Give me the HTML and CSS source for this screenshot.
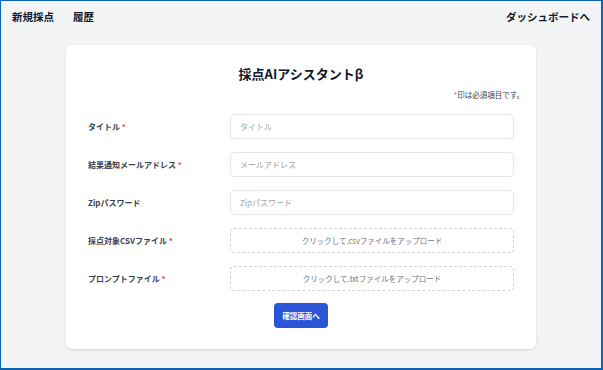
FILE: index.html
```html
<!DOCTYPE html>
<html lang="ja">

<head>
    <meta charset="utf-8">
    <meta name="viewport" content="width=device-width, initial-scale=1.0">
    <title>採点AIアシスタントβ</title>
    <link rel="stylesheet" href="styles.css">
</head>

<body>
    <div class="frame">
        <header class="topbar">
            <nav class="nav-left">
                <a href="#">新規採点</a>
                <a href="#">履歴</a>
            </nav>
            <a href="#" class="nav-right">ダッシュボードへ</a>
        </header>

        <main>
            <section class="card">
                <h1>採点AIアシスタントβ</h1>
                <p class="note"><span class="req">*</span>印は必須項目です。</p>

                <form class="form">
                    <label class="label" for="title">タイトル <span class="req">*</span></label>
                    <input class="field" id="title" type="text" placeholder="タイトル">

                    <label class="label" for="mail">結果通知メールアドレス <span class="req">*</span></label>
                    <input class="field" id="mail" type="email" placeholder="メールアドレス">

                    <label class="label" for="zip">Zipパスワード</label>
                    <input class="field" id="zip" type="text" placeholder="Zipパスワード">

                    <label class="label">採点対象CSVファイル <span class="req">*</span></label>
                    <div class="upload">クリックして.csvファイルをアップロード</div>

                    <label class="label">プロンプトファイル <span class="req">*</span></label>
                    <div class="upload">クリックして.txtファイルをアップロード</div>

                    <div class="actions">
                        <button type="button" class="submit">確認画面へ</button>
                    </div>
                </form>
            </section>
        </main>
    </div>
</body>

</html>
```

FILE: styles.css
```css
* {
    margin: 0;
    padding: 0;
    box-sizing: border-box;
}

html,
body {
    height: 100%;
}

body {
    font-family: "Noto Sans CJK JP", "Noto Sans", sans-serif;
    background-color: #f3f4f6;
    color: #111827;
}

.frame {
    height: 100%;
    border-style: solid;
    border-color: #0b62b5;
    border-width: 1px 2px 2px 1px;
}

.topbar {
    display: flex;
    justify-content: space-between;
    align-items: center;
    height: 30px;
    padding: 0 11px 0 11px;
}

.topbar a {
    font-size: 10.5px;
    font-weight: 700;
    color: #111827;
    text-decoration: none;
}

.nav-left {
    display: flex;
    gap: 19px;
}

main {
    padding: 14px 65px 0 65px;
}

.card {
    background-color: #fff;
    border-radius: 6px;
    box-shadow: 0 1px 3px rgba(0, 0, 0, 0.12);
    padding: 19px 22px 21px 22px;
}

h1 {
    font-size: 13px;
    font-weight: 700;
    line-height: 20px;
    text-align: center;
}

.note {
    font-size: 7.5px;
    line-height: 12px;
    text-align: right;
    color: #374151;
    margin: 5px -10px 13px 0;
}

.req {
    color: #ef4444;
}

.form {
    display: grid;
    grid-template-columns: 1fr 2fr;
    row-gap: 13px;
    align-items: center;
}

.label {
    font-size: 8px;
    font-weight: 700;
    color: #374151;
}

.field {
    height: 25px;
    border: 1px solid #e5e7eb;
    border-radius: 4px;
    padding: 0 9px;
    font-family: inherit;
    font-size: 8px;
    color: #111827;
}

.field::placeholder {
    color: #9ca3af;
}

.upload {
    height: 25px;
    border: 1px dashed #d1d5db;
    border-radius: 4px;
    display: flex;
    align-items: center;
    justify-content: center;
    font-size: 7.5px;
    color: #6b7280;
}

.actions {
    grid-column: 1 / -1;
    display: flex;
    justify-content: center;
    margin-top: -1px;
}

.submit {
    width: 54px;
    height: 25px;
    border: none;
    border-radius: 4px;
    background-color: #2a55d6;
    color: #fff;
    font-family: inherit;
    font-size: 7.5px;
    font-weight: 600;
}
```
